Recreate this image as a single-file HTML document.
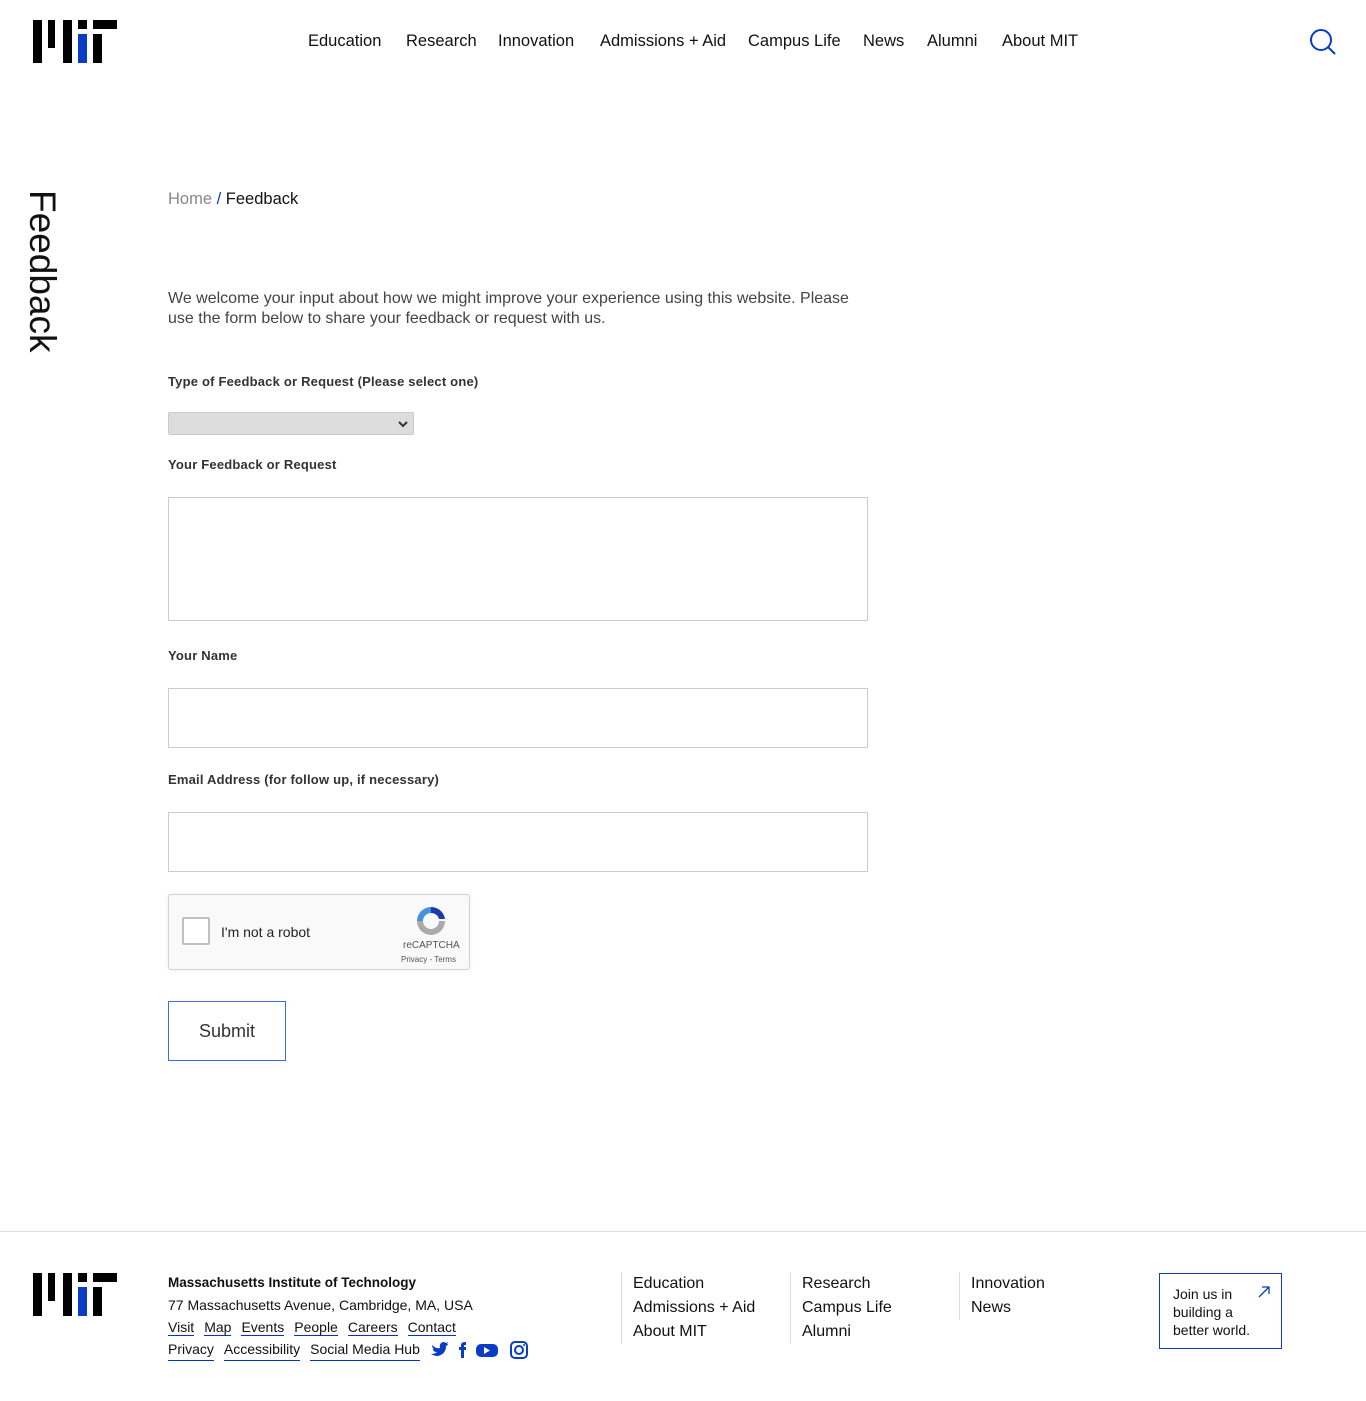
<!DOCTYPE html>
<html><head><meta charset="utf-8"><style>
*{margin:0;padding:0;box-sizing:border-box}
body{width:1366px;height:1401px;position:relative;background:#fff;font-family:"Liberation Sans",sans-serif;color:#000;overflow:hidden}
.a{position:absolute}
.nav a{position:absolute;top:32px;font-size:16.5px;color:#111;text-decoration:none;white-space:nowrap}
.lbl{position:absolute;left:168px;font-size:13px;font-weight:bold;color:#333;letter-spacing:.2px}
.inp{position:absolute;left:168px;width:700px;border:1px solid #ccc;background:#fff}
.fl a{color:#111;text-decoration:none;border-bottom:1px solid #0033cc;margin-right:10px}
.fc{position:absolute;top:1272px;border-left:1px solid #ddd;padding-left:11px;font-size:16px;line-height:24px;color:#111}
</style></head><body>
<svg class="a" style="left:0;top:0" width="120" height="70">
<rect x="33" y="20" width="9" height="43"/><rect x="48" y="20" width="7" height="28"/><rect x="63" y="20" width="9" height="43"/><rect x="78" y="20" width="9" height="9"/><rect x="78" y="34" width="9" height="29" fill="#0a3cc4"/><rect x="93" y="20" width="24" height="9"/><rect x="93" y="34" width="9" height="29"/></svg>
<div class="nav">
<a style="left:308px">Education</a><a style="left:406px">Research</a><a style="left:498px">Innovation</a><a style="left:600px">Admissions + Aid</a><a style="left:748px">Campus Life</a><a style="left:863px">News</a><a style="left:927px">Alumni</a><a style="left:1002px">About MIT</a></div>
<svg class="a" style="left:1308px;top:27px" width="30" height="30"><circle cx="13" cy="13" r="10" fill="none" stroke="#0a3cc4" stroke-width="2"/><line x1="20" y1="20" x2="27" y2="27" stroke="#0a3cc4" stroke-width="2"/></svg>
<div class="a" style="left:24px;top:190px;width:40px;height:165px"><div style="transform:rotate(90deg);transform-origin:0 0;position:absolute;left:36px;top:0;font-size:37px;line-height:36px;white-space:nowrap;color:#111">Feedback</div></div>
<div class="a" style="left:168px;top:190px;font-size:16.5px"><span style="color:#888">Home</span> <span style="color:#0a3cc4">/</span> <span style="color:#111">Feedback</span></div>
<div class="a" style="left:168px;top:289px;width:700px;font-size:16px;line-height:20px;color:#444">We welcome your input about how we might improve your experience using this website. Please use the form below to share your feedback or request with us.</div>
<div class="lbl" style="top:374px">Type of Feedback or Request (Please select one)</div>
<div class="a" style="left:168px;top:412px;width:246px;height:23px;background:#ddd;border:1px solid #ccc;border-radius:2px"><svg class="a" style="right:5px;top:7px" width="10" height="8"><path d="M1 2 L5 6 L9 2" fill="none" stroke="#333" stroke-width="2"/></svg></div>
<div class="lbl" style="top:457px">Your Feedback or Request</div>
<div class="inp" style="top:497px;height:124px"></div>
<div class="lbl" style="top:648px">Your Name</div>
<div class="inp" style="top:688px;height:60px"></div>
<div class="lbl" style="top:772px">Email Address (for follow up, if necessary)</div>
<div class="inp" style="top:812px;height:60px"></div>
<div class="a" style="left:168px;top:894px;width:302px;height:76px;background:#f9f9f9;border:1px solid #d3d3d3;border-radius:3px;box-shadow:0 0 4px rgba(0,0,0,.08)">
<div class="a" style="left:13px;top:22px;width:28px;height:28px;border:2px solid #c1c1c1;border-radius:2px;background:#fff"></div>
<div class="a" style="left:52px;top:29px;font-size:14px;color:#222">I'm not a robot</div>
<svg class="a" style="left:246px;top:10px" width="32" height="32"><path d="M16 2 A14 14 0 0 1 30 14 L24 14 A8 8 0 0 0 16 8Z" fill="#1c3aa9"/><path d="M2 16 A14 14 0 0 1 16 2 L16 8 A8 8 0 0 0 8 16Z" fill="#4a90e2"/><path d="M30 16 A14 14 0 0 1 2 16 L8 16 A8 8 0 0 0 24 16Z" fill="#aaa"/></svg>
<div class="a" style="left:234px;top:45px;font-size:10px;color:#555">reCAPTCHA</div>
<div class="a" style="left:232px;top:60px;font-size:8px;color:#555">Privacy - Terms</div></div>
<div class="a" style="left:168px;top:1001px;width:118px;height:60px;border:1px solid #3b6cf0;font-size:18px;color:#333;text-align:center;line-height:58px">Submit</div>
<div class="a" style="left:0;top:1231px;width:1366px;height:1px;background:#ddd"></div>
<svg class="a" style="left:0;top:1253px" width="120" height="70">
<rect x="33" y="20" width="9" height="43"/><rect x="48" y="20" width="7" height="28"/><rect x="63" y="20" width="9" height="43"/><rect x="78" y="20" width="9" height="9"/><rect x="78" y="34" width="9" height="29" fill="#0a3cc4"/><rect x="93" y="20" width="24" height="9"/><rect x="93" y="34" width="9" height="29"/></svg>
<div class="a fl" style="left:168px;top:1272px;font-size:14px;line-height:22px;color:#111;white-space:nowrap">
<div style="font-weight:bold;font-size:13.5px">Massachusetts Institute of Technology</div>
<div>77 Massachusetts Avenue, Cambridge, MA, USA</div>
<div><a>Visit</a><a>Map</a><a>Events</a><a>People</a><a>Careers</a><a>Contact</a></div>
<div style="display:flex;align-items:center"><a>Privacy</a><a>Accessibility</a><a>Social Media Hub</a>
<svg width="100" height="20" style="margin-left:0"><path d="M2 5 Q6 9 10 8 Q9 3 13 2 Q15 2 16 3 L18 2 L17 4 L18 4 Q17 6 16 6 Q16 14 8 16 Q4 16 1 14 Q5 14 7 12 Q3 12 3 9 Q4 9 4 9 Q2 8 2 5Z" fill="#0a3cc4"/><path d="M31 18 V10 H29 V7 H31 V5 Q31 2 35 2 H36 V5 H35 Q34 5 34 6 V7 H36 L36 10 H34 V18Z" fill="#0a3cc4"/><rect x="46" y="4" width="22" height="13" rx="5" fill="#0a3cc4"/><path d="M54 7 L60 10.5 L54 14Z" fill="#fff"/><rect x="81" y="2" width="16" height="16" rx="4" fill="none" stroke="#0a3cc4" stroke-width="2"/><circle cx="89" cy="10" r="4" fill="none" stroke="#0a3cc4" stroke-width="2"/><circle cx="94" cy="5" r="1" fill="#0a3cc4"/></svg></div></div>
<div class="fc" style="left:621px">Education<br>Admissions + Aid<br>About MIT</div>
<div class="fc" style="left:790px">Research<br>Campus Life<br>Alumni</div>
<div class="fc" style="left:959px">Innovation<br>News</div>
<div class="a" style="left:1159px;top:1273px;width:123px;height:76px;border:1.5px solid #0a3cc4;padding:11px 0 0 13px;font-size:14px;line-height:18px;color:#111">Join us in<br>building a<br>better world.
<svg class="a" style="left:97px;top:11px" width="14" height="14"><path d="M2 12 L12 2 M5 2 H12 V9" fill="none" stroke="#0a3cc4" stroke-width="1.3"/></svg></div>
</body></html>
